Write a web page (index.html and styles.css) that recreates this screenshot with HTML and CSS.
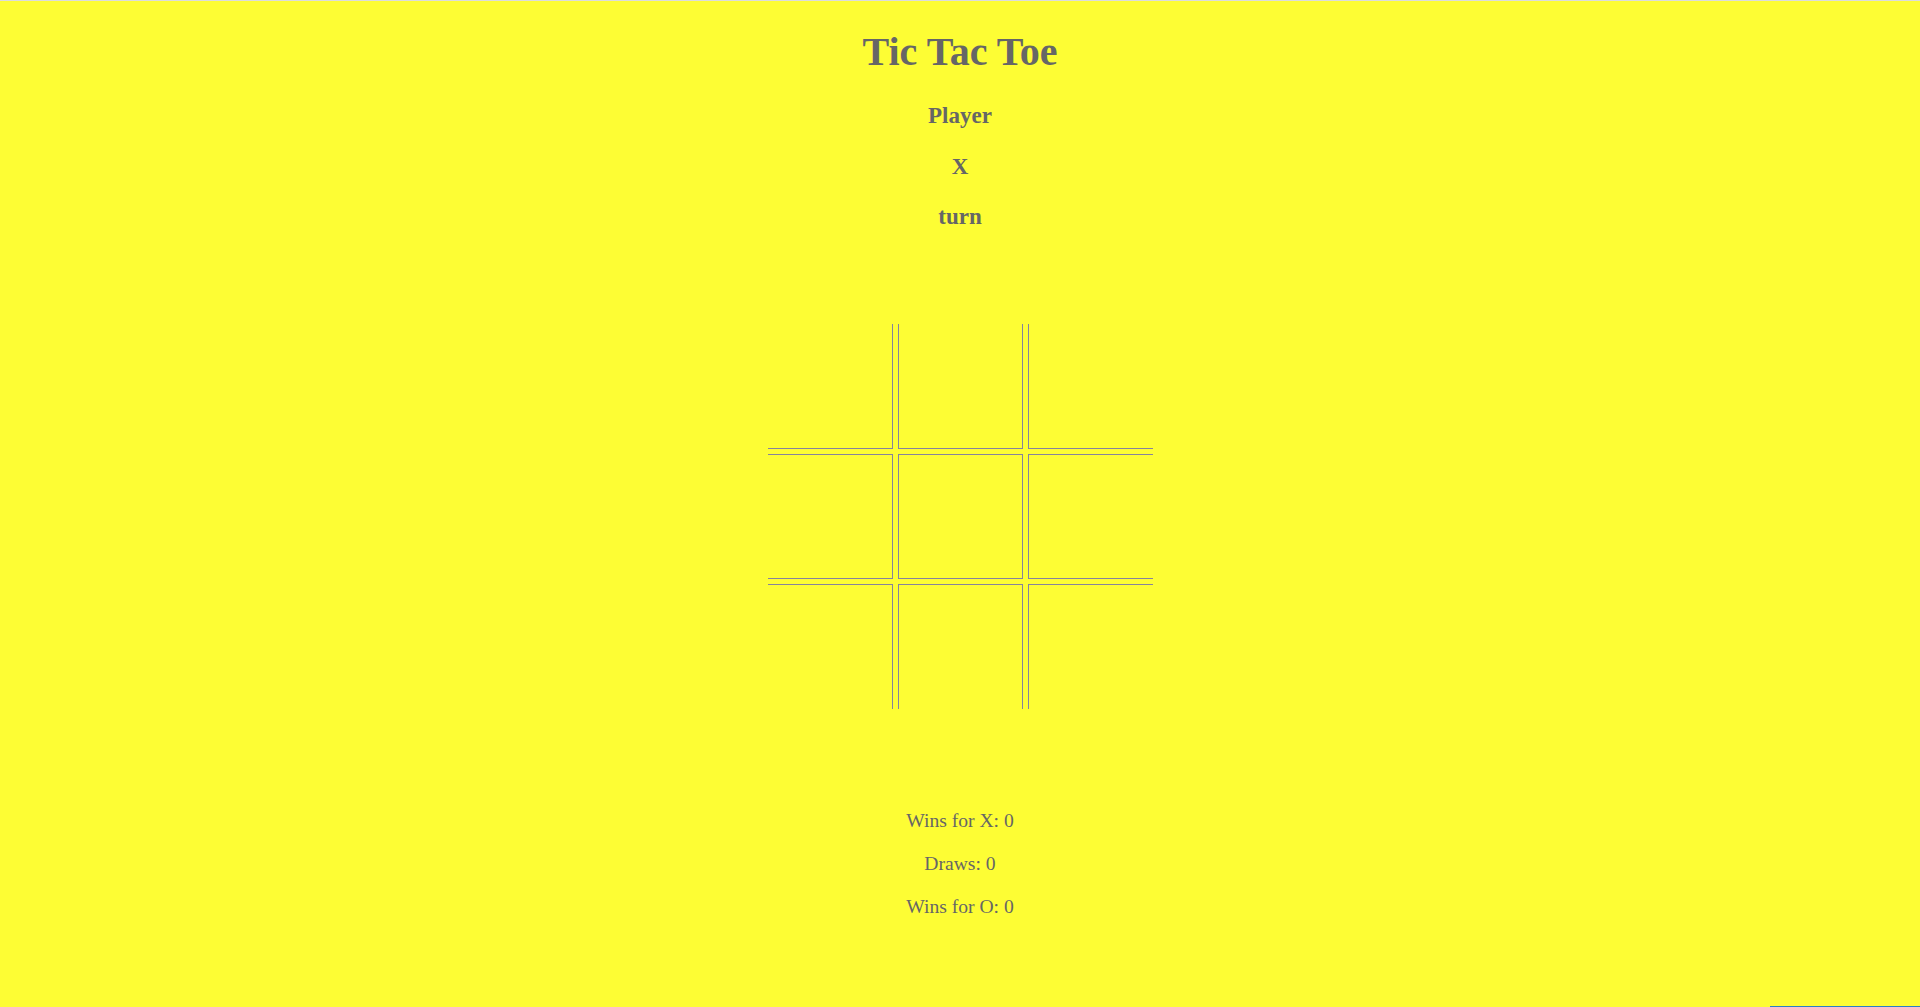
FILE: index.html
```html
<!DOCTYPE html>
<html lang="en">
<head>
<meta charset="utf-8">
<title>Tic Tac Toe</title>
<link rel="stylesheet" href="styles.css">
</head>
<body>
<div class="topline"></div>
<main class="game">
  <h1 class="title">Tic Tac Toe</h1>
  <div class="status">
    <p class="status-line">Player</p>
    <p class="status-line">X</p>
    <p class="status-line">turn</p>
  </div>
  <div class="board">
    <div class="cell r1 c1"></div>
    <div class="cell r1 c2"></div>
    <div class="cell r1 c3"></div>
    <div class="cell r2 c1"></div>
    <div class="cell r2 c2"></div>
    <div class="cell r2 c3"></div>
    <div class="cell r3 c1"></div>
    <div class="cell r3 c2"></div>
    <div class="cell r3 c3"></div>
  </div>
  <div class="scores">
    <p class="score">Wins for X: 0</p>
    <p class="score">Draws: 0</p>
    <p class="score">Wins for O: 0</p>
  </div>
</main>
<div class="corner-bar"></div>
</body>
</html>
```
FILE: styles.css
```css
html, body {
  margin: 0;
  padding: 0;
  background: #fdfd34;
  height: 100%;
}
body {
  font-family: "Liberation Serif", "Times New Roman", serif;
  color: #666666;
  overflow: hidden;
}
.topline {
  height: 1px;
  background: #dcdcdc;
}
.game {
  display: flex;
  flex-direction: column;
  align-items: center;
}
.title {
  margin: 27.5px 0 0;
  font-size: 40px;
  line-height: 45px;
  font-weight: bold;
}
.status {
  margin-top: 28.5px;
  display: flex;
  flex-direction: column;
  align-items: center;
  gap: 23.5px;
}
.status-line {
  margin: 0;
  font-size: 23px;
  line-height: 27px;
  font-weight: bold;
}
.board {
  margin-top: 94px;
  display: grid;
  grid-template-columns: repeat(3, 125px);
  grid-template-rows: repeat(3, 125px);
  gap: 5px;
}
.cell {
  box-sizing: border-box;
  border: 1px solid #86839c;
}
.r1 { border-top: none; }
.r3 { border-bottom: none; }
.c1 { border-left: none; }
.c3 { border-right: none; }
.scores {
  margin-top: 100px;
  display: flex;
  flex-direction: column;
  align-items: center;
  gap: 20px;
}
.score {
  margin: 0;
  font-size: 19.6px;
  line-height: 23px;
}
.corner-bar {
  position: fixed;
  right: 0;
  bottom: 0;
  width: 150px;
  height: 1px;
  background: #2a80c4;
}
```
